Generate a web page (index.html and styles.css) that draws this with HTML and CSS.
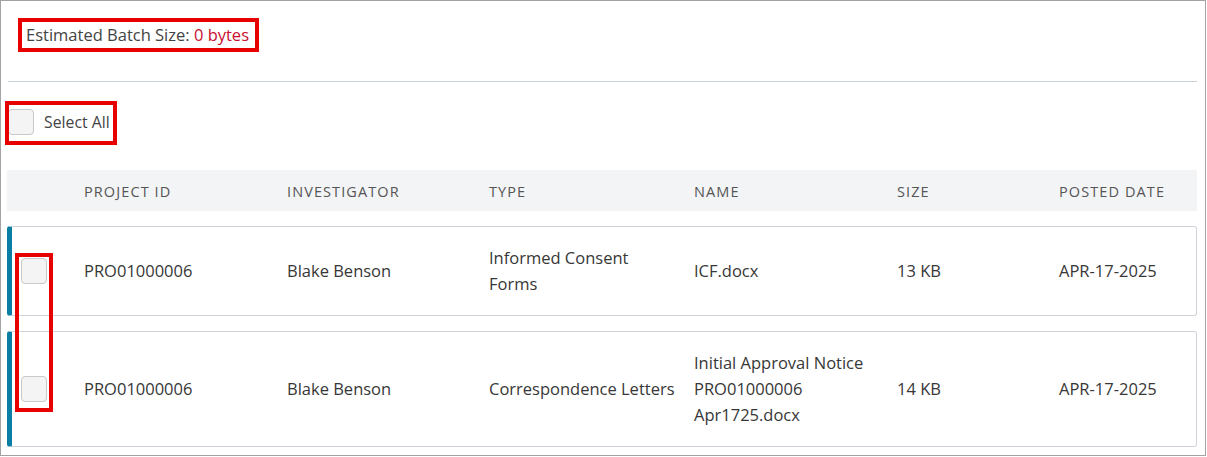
FILE: index.html
```html
<!DOCTYPE html>
<html lang="en">
<head>
<meta charset="utf-8">
<title>Batch Download</title>
<link rel="stylesheet" href="styles.css">
</head>
<body>
<div class="frame">
  <div class="batch">Estimated Batch Size: <span class="bytes">0 bytes</span></div>
  <hr class="divider">
  <label class="select-all"><span class="cb"></span><span>Select All</span></label>

  <div class="table">
    <div class="thead">
      <div class="cell"></div>
      <div class="cell">Project ID</div>
      <div class="cell">Investigator</div>
      <div class="cell">Type</div>
      <div class="cell">Name</div>
      <div class="cell">Size</div>
      <div class="cell">Posted Date</div>
    </div>
    <div class="row">
      <div class="cell check"><span class="cb"></span></div>
      <div class="cell">PRO01000006</div>
      <div class="cell">Blake Benson</div>
      <div class="cell">Informed Consent Forms</div>
      <div class="cell">ICF.docx</div>
      <div class="cell">13 KB</div>
      <div class="cell">APR-17-2025</div>
    </div>
    <div class="row">
      <div class="cell check"><span class="cb"></span></div>
      <div class="cell">PRO01000006</div>
      <div class="cell">Blake Benson</div>
      <div class="cell">Correspondence Letters</div>
      <div class="cell">Initial Approval Notice PRO01000006 Apr1725.docx</div>
      <div class="cell">14 KB</div>
      <div class="cell">APR-17-2025</div>
    </div>
  </div>

  <div class="mark mark-batch"></div>
  <div class="mark mark-select"></div>
  <div class="mark mark-rows"></div>
</div>
</body>
</html>
```

FILE: styles.css
```css
* { box-sizing: border-box; }

html, body {
  margin: 0;
  padding: 0;
  background: #ffffff;
}

body {
  font-family: "Open Sans", "Noto Sans", sans-serif;
  font-size: 16.5px;
  line-height: 26px;
  color: #373737;
}

.frame {
  position: relative;
  width: 1206px;
  height: 456px;
  border: 1px solid #a3a3a3;
  padding: 0 8px 0 6px;
  overflow: hidden;
}

.batch {
  margin: 21px 0 0 19px;
  color: #444444;
}

.bytes {
  color: #c8102e;
}

.divider {
  margin: 33px 0 0 1px;
  border: 0;
  border-top: 1px solid #cdd3da;
  height: 0;
}

.select-all {
  display: flex;
  align-items: center;
  gap: 10px;
  margin: 27px 0 0 1px;
  color: #444444;
  font-size: 15.8px;
}

.cb {
  display: inline-block;
  width: 26px;
  height: 26px;
  border: 1px solid #c9c9c9;
  border-radius: 4px;
  background: #f4f4f4;
  flex: none;
}

.table {
  margin-top: 35px;
  display: flex;
  flex-direction: column;
  gap: 15px;
}

.thead,
.row {
  display: grid;
  align-items: center;
}

.thead {
  grid-template-columns: 77px 203px 202px 205px 203px 162px 1fr;
  height: 41px;
  background: #f3f4f6;
  color: #555555;
  font-size: 14.5px;
  letter-spacing: 1.1px;
  text-transform: uppercase;
  padding-top: 2px;
}

.row {
  grid-template-columns: 72px 203px 202px 205px 203px 162px 1fr;
  border: 1px solid #cfd4da;
  border-left: 5px solid #0a7ea4;
  border-radius: 3px;
  padding: 18px 0;
}

.row .cell {
  padding-right: 17px;
}

.check {
  padding-left: 9px;
  display: flex;
  align-items: center;
}

.mark {
  position: absolute;
  border: 4px solid #e60000;
  pointer-events: none;
}

.mark-batch {
  left: 17px;
  top: 17px;
  width: 241px;
  height: 34px;
}

.mark-select {
  left: 4px;
  top: 100px;
  width: 112px;
  height: 44px;
}

.mark-rows {
  left: 14px;
  top: 252px;
  width: 38px;
  height: 159px;
}
```
